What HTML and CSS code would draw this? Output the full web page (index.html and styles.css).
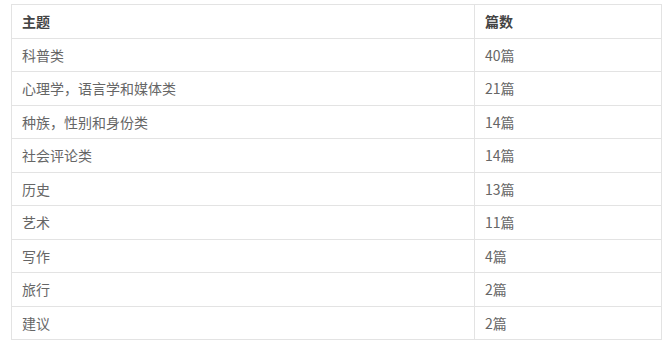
FILE: index.html
```html
<!DOCTYPE html>
<html lang="zh">
<head>
<meta charset="utf-8">
<link rel="stylesheet" href="styles.css">
</head>
<body>
<table class="topics">
  <thead>
    <tr><th class="c-topic">主题</th><th class="c-count">篇数</th></tr>
  </thead>
  <tbody>
    <tr><td>科普类</td><td>40篇</td></tr>
    <tr><td>心理学，语言学和媒体类</td><td>21篇</td></tr>
    <tr><td>种族，性别和身份类</td><td>14篇</td></tr>
    <tr><td>社会评论类</td><td>14篇</td></tr>
    <tr><td>历史</td><td>13篇</td></tr>
    <tr><td>艺术</td><td>11篇</td></tr>
    <tr><td>写作</td><td>4篇</td></tr>
    <tr><td>旅行</td><td>2篇</td></tr>
    <tr><td>建议</td><td>2篇</td></tr>
  </tbody>
</table>
</body>
</html>
```

FILE: styles.css
```css
html, body {
  margin: 0;
  background: #fff;
}
body {
  padding: 4px 0 0 11px;
  font-family: "Noto Sans CJK SC", "Liberation Sans", sans-serif;
  font-size: 14px;
  color: #666;
}
.topics {
  border-collapse: collapse;
  width: 650px;
  table-layout: fixed;
}
.topics th,
.topics td {
  border: 1px solid #e3e3e3;
  height: 33.5px;
  padding: 0 10px;
  text-align: left;
  vertical-align: middle;
  line-height: 16px;
  box-sizing: border-box;
}
.topics th {
  font-weight: bold;
  color: #444;
}
.c-topic { width: 463px; }
.c-count { width: 187px; }
```
